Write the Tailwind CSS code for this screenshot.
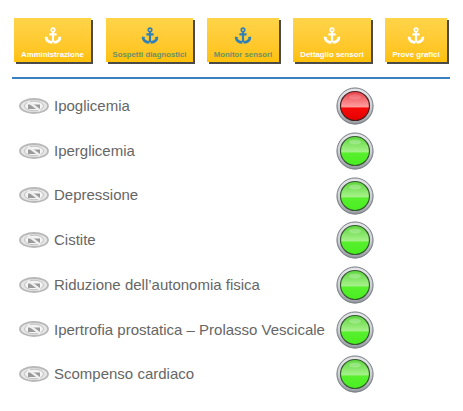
<!DOCTYPE html>
<html>
<head>
    <meta charset="utf-8">
    <script src="https://cdn.jsdelivr.net/npm/@tailwindcss/browser@4"></script>
    <title>Diagnostica</title>
</head>
<body class="bg-white font-['Liberation_Sans',Arial,sans-serif] w-[463px] h-[411px] overflow-hidden">
    <svg class="absolute w-0 h-0">
        <defs>
            <filter id="soft"><feGaussianBlur stdDeviation="0.5"/></filter>
            <symbol id="anchor" viewBox="0 0 20 20">
                <circle cx="10" cy="3.2" r="2" fill="none" stroke="currentColor" stroke-width="1.8"/>
                <path d="M10 5v12M6 8.200h8" fill="none" stroke="currentColor" stroke-width="2.400"/>
                <path d="M1 10.500l3.800 1-1 .9c.8 1.800 3 2.800 5.400 3.100V18.500c-3.800 0-7.200-1.900-8.200-5.500zM19 10.500l-3.800 1 1 .9c-.8 1.800-3 2.800-5.400 3.100V18.500c3.800 0 7.200-1.900 8.200-5.500z" fill="currentColor"/>
            </symbol>
            <symbol id="eye" viewBox="0 0 30 16">
                <g filter="url(#soft)">
                    <ellipse cx="15" cy="8" rx="14" ry="7" fill="#e6e6e6" stroke="#b8b8b8" stroke-width="1.800"/>
                    <ellipse cx="15" cy="8" rx="9.500" ry="4.800" fill="#f4f4f4" stroke="#c0c0c0" stroke-width="1"/>
                    <path d="M9 6.500h12v4.500H9z" fill="#9a9a9a"/>
                    <path d="M9 3.500l12 9" stroke="#f0f0f0" stroke-width="2.200"/>
                </g>
            </symbol>
            <radialGradient id="bezel" cx="50%" cy="30%" r="75%">
                <stop offset="0" stop-color="#f8f8fa"/>
                <stop offset="0.65" stop-color="#d0d3d8"/>
                <stop offset="1" stop-color="#777c84"/>
            </radialGradient>
            <linearGradient id="greenLens" x1="0" y1="0" x2="0" y2="1">
                <stop offset="0" stop-color="#5cd63c"/>
                <stop offset="0.54" stop-color="#a8f28c"/>
                <stop offset="0.56" stop-color="#58f02e"/>
                <stop offset="1" stop-color="#48ee20"/>
            </linearGradient>
            <linearGradient id="redLens" x1="0" y1="0" x2="0" y2="1">
                <stop offset="0" stop-color="#e8404a"/>
                <stop offset="0.54" stop-color="#ffa0a0"/>
                <stop offset="0.56" stop-color="#f60a0a"/>
                <stop offset="1" stop-color="#e60000"/>
            </linearGradient>
            <symbol id="light-green" viewBox="0 0 38 38">
                <circle cx="19" cy="19" r="18.500" fill="url(#bezel)"/>
                <circle cx="19" cy="19" r="18" fill="none" stroke="#7d8289" stroke-width="1"/>
                <circle cx="19" cy="19" r="14.500" fill="url(#greenLens)" stroke="#3a5a34" stroke-width="1.200"/>
                <ellipse cx="19" cy="10" rx="6" ry="2.500" fill="#fff" opacity="0.25"/>
            </symbol>
            <symbol id="light-red" viewBox="0 0 38 38">
                <circle cx="19" cy="19" r="18.500" fill="url(#bezel)"/>
                <circle cx="19" cy="19" r="18" fill="none" stroke="#7d8289" stroke-width="1"/>
                <circle cx="19" cy="19" r="14.500" fill="url(#redLens)" stroke="#4a2020" stroke-width="1.200"/>
                <ellipse cx="19" cy="10" rx="6" ry="2.500" fill="#fff" opacity="0.15"/>
            </symbol>
        </defs>
    </svg>

    <!-- Menu -->
    <div class="flex pl-[14px] pt-[18px]">
        <div class="w-[77px] h-[44px] mr-[15px] flex flex-col items-center bg-gradient-to-b from-[#ffd449] to-[#ffc107] shadow-[2px_2px_0_#4a4a48] text-white">
            <svg class="w-[18px] h-[18px] mt-[9px]"><use href="#anchor"/></svg>
            <span class="mt-[4px] text-[7.800px] font-bold leading-[11px] whitespace-nowrap">Amministrazione</span>
        </div>
        <div class="w-[87px] h-[44px] mr-[14px] flex flex-col items-center bg-gradient-to-b from-[#ffd449] to-[#ffc107] shadow-[2px_2px_0_#4a4a48] text-[#2f7fb8]">
            <svg class="w-[18px] h-[18px] mt-[9px]"><use href="#anchor"/></svg>
            <span class="mt-[4px] text-[7.800px] font-bold leading-[11px] whitespace-nowrap text-[#6b9065]">Sospetti diagnostici</span>
        </div>
        <div class="w-[72px] h-[44px] mr-[14px] flex flex-col items-center bg-gradient-to-b from-[#ffd449] to-[#ffc107] shadow-[2px_2px_0_#4a4a48] text-[#2f7fb8]">
            <svg class="w-[18px] h-[18px] mt-[9px]"><use href="#anchor"/></svg>
            <span class="mt-[4px] text-[7.800px] font-bold leading-[11px] whitespace-nowrap text-[#6b9065]">Monitor sensori</span>
        </div>
        <div class="w-[78px] h-[44px] mr-[14px] flex flex-col items-center bg-gradient-to-b from-[#ffd449] to-[#ffc107] shadow-[2px_2px_0_#4a4a48] text-white">
            <svg class="w-[18px] h-[18px] mt-[9px]"><use href="#anchor"/></svg>
            <span class="mt-[4px] text-[7.800px] font-bold leading-[11px] whitespace-nowrap">Dettaglio sensori</span>
        </div>
        <div class="w-[62px] h-[44px] flex flex-col items-center bg-gradient-to-b from-[#ffd449] to-[#ffc107] shadow-[2px_2px_0_#4a4a48] text-white">
            <svg class="w-[18px] h-[18px] mt-[9px]"><use href="#anchor"/></svg>
            <span class="mt-[4px] text-[7.800px] font-bold leading-[11px] whitespace-nowrap">Prove grafici</span>
        </div>
    </div>

    <div class="ml-[12px] mt-[15px] w-[438px] h-[2px] bg-[#3a80c0]"></div>

    <!-- Lista sospetti -->
    <div class="pl-[19px] pt-[5px] text-[15px] text-[#666666]">
        <div class="flex items-center h-[44.700px]">
            <svg class="w-[30px] h-[16px] -mt-[1px] shrink-0"><use href="#eye"/></svg>
            <span class="ml-[5px] w-[282px] whitespace-nowrap">Ipoglicemia</span>
            <svg class="w-[38px] h-[38px]"><use href="#light-red"/></svg>
        </div>
        <div class="flex items-center h-[44.700px]">
            <svg class="w-[30px] h-[16px] -mt-[1px] shrink-0"><use href="#eye"/></svg>
            <span class="ml-[5px] w-[282px] whitespace-nowrap">Iperglicemia</span>
            <svg class="w-[38px] h-[38px]"><use href="#light-green"/></svg>
        </div>
        <div class="flex items-center h-[44.700px]">
            <svg class="w-[30px] h-[16px] -mt-[1px] shrink-0"><use href="#eye"/></svg>
            <span class="ml-[5px] w-[282px] whitespace-nowrap">Depressione</span>
            <svg class="w-[38px] h-[38px]"><use href="#light-green"/></svg>
        </div>
        <div class="flex items-center h-[44.700px]">
            <svg class="w-[30px] h-[16px] -mt-[1px] shrink-0"><use href="#eye"/></svg>
            <span class="ml-[5px] w-[282px] whitespace-nowrap">Cistite</span>
            <svg class="w-[38px] h-[38px]"><use href="#light-green"/></svg>
        </div>
        <div class="flex items-center h-[44.700px]">
            <svg class="w-[30px] h-[16px] -mt-[1px] shrink-0"><use href="#eye"/></svg>
            <span class="ml-[5px] w-[282px] whitespace-nowrap">Riduzione dell’autonomia fisica</span>
            <svg class="w-[38px] h-[38px]"><use href="#light-green"/></svg>
        </div>
        <div class="flex items-center h-[44.700px]">
            <svg class="w-[30px] h-[16px] -mt-[1px] shrink-0"><use href="#eye"/></svg>
            <span class="ml-[5px] w-[282px] whitespace-nowrap">Ipertrofia prostatica – Prolasso Vescicale</span>
            <svg class="w-[38px] h-[38px]"><use href="#light-green"/></svg>
        </div>
        <div class="flex items-center h-[44.700px]">
            <svg class="w-[30px] h-[16px] -mt-[1px] shrink-0"><use href="#eye"/></svg>
            <span class="ml-[5px] w-[282px] whitespace-nowrap">Scompenso cardiaco</span>
            <svg class="w-[38px] h-[38px]"><use href="#light-green"/></svg>
        </div>
    </div>
</body>
</html>
